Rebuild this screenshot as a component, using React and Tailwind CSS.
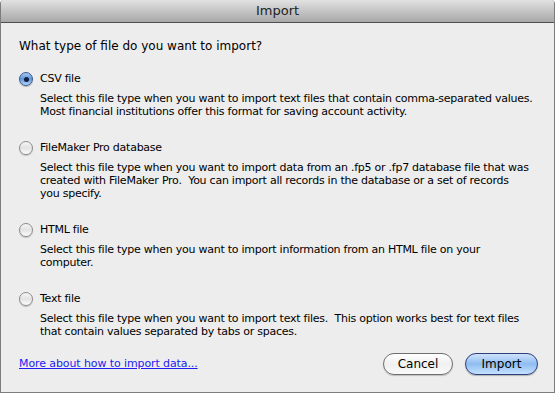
import React from 'react';

const options = [
  {
    title: 'CSV file',
    lines: [
      'Select this file type when you want to import text files that contain comma-separated values.',
      'Most financial institutions offer this format for saving account activity.',
    ],
    selected: true,
    gap: 'mt-[17px]',
  },
  {
    title: 'FileMaker Pro database',
    lines: [
      'Select this file type when you want to import data from an .fp5 or .fp7 database file that was',
      'created with FileMaker Pro.  You can import all records in the database or a set of records',
      'you specify.',
    ],
    gap: 'mt-[22px]',
  },
  {
    title: 'HTML file',
    lines: [
      'Select this file type when you want to import information from an HTML file on your',
      'computer.',
    ],
    gap: 'mt-[22px]',
  },
  {
    title: 'Text file',
    lines: [
      'Select this file type when you want to import text files.  This option works best for text files',
      'that contain values separated by tabs or spaces.',
    ],
    gap: 'mt-[22px]',
  },
];

function Radio({ selected }) {
  if (selected) {
    return (
      <span className="w-[14px] h-[14px] rounded-full border border-[#3b5a92] bg-gradient-to-b from-[#a9c8f0] via-[#5f95dc] to-[#b7d6fa] flex items-center justify-center shadow-[0_1px_1px_rgba(0,0,0,0.25)]">
        <span className="w-[5px] h-[5px] rounded-full bg-[#10203a]" />
      </span>
    );
  }
  return (
    <span className="w-[14px] h-[14px] rounded-full border border-[#8c8c8c] bg-gradient-to-b from-[#f6f6f6] via-[#e3e3e3] to-[#fdfdfd] shadow-[0_1px_1px_rgba(0,0,0,0.2)]" />
  );
}

export default function App() {
  return (
    <div className="w-[555px] h-[393px] flex flex-col bg-[#ededed] border-x border-b border-[#7c7c7c] rounded-t-[4px] overflow-hidden text-black" style={{ fontFamily: '"DejaVu Sans", sans-serif' }}>
      <div className="h-[23px] shrink-0 bg-gradient-to-b from-[#e2e2e2] to-[#a8a8a8] border-b border-[#4f4f4f] flex items-center justify-center text-[13px] text-[#222]">
        Import
      </div>

      <div className="flex-1 flex flex-col pl-[18px] pr-4 pt-[15px]">
        <p className="text-[12px] leading-[16px]">What type of file do you want to import?</p>

        {options.map((opt) => (
          <div key={opt.title} className={opt.gap}>
            <div className="flex items-center gap-[7px] h-[16px]">
              <Radio selected={opt.selected} />
              <span className="text-[11px] tracking-[-0.25px]">{opt.title}</span>
            </div>
            <div className="pl-[21px] mt-[5px] text-[11px] leading-[13px] tracking-[-0.25px] whitespace-pre">
              {opt.lines.map((l) => (
                <div key={l}>{l}</div>
              ))}
            </div>
          </div>
        ))}

        <div className="mt-auto mb-[17px] flex items-center justify-between">
          <a href="#" className="text-[11px] tracking-[-0.1px] text-[#1c1cf0] underline">More about how to import data...</a>
          <div className="flex gap-3">
            <button className="w-[70px] h-[22px] rounded-full border border-[#6f6f6f] bg-gradient-to-b from-white via-[#f0f0f0] to-[#fafafa] text-[12px] shadow-[0_1px_1px_rgba(0,0,0,0.2)]">
              Cancel
            </button>
            <button className="w-[73px] h-[22px] rounded-full border border-[#2b3f7e] bg-gradient-to-b from-[#cfe2fb] via-[#8fbdf1] to-[#c6e2ff] text-[12px] shadow-[0_1px_1px_rgba(0,0,0,0.25)]">
              Import
            </button>
          </div>
        </div>
      </div>
    </div>
  );
}
